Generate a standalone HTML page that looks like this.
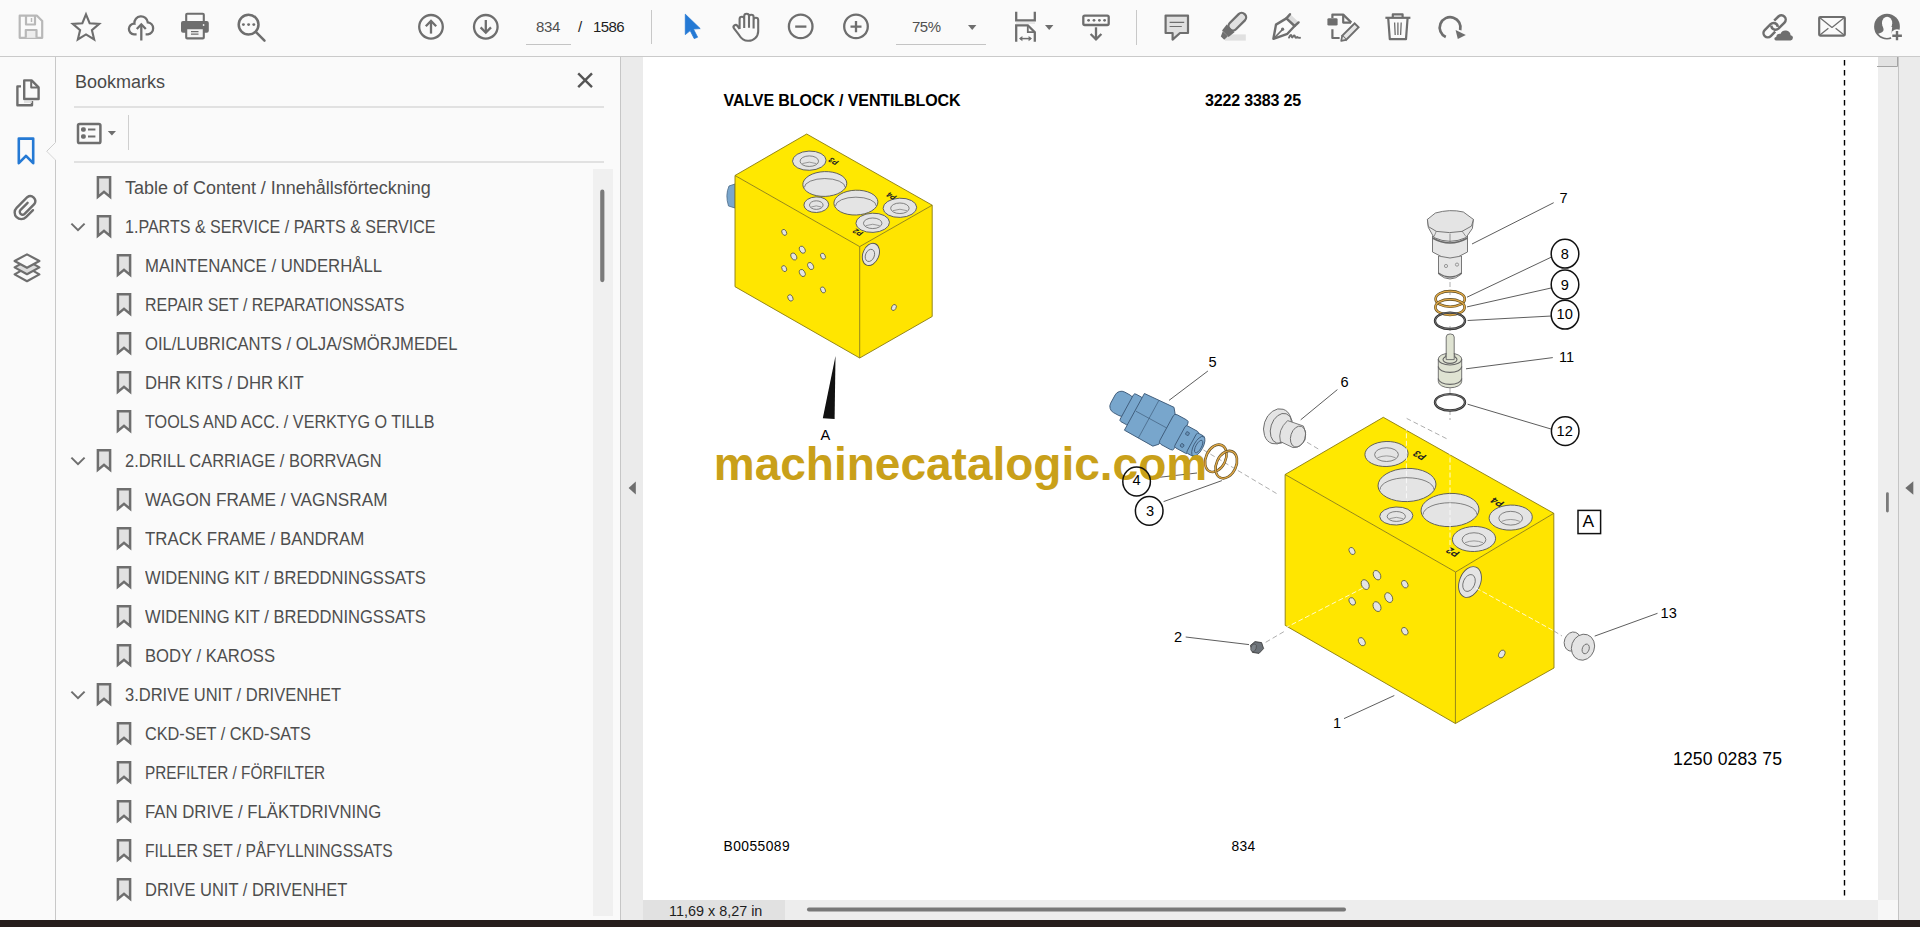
<!DOCTYPE html><html><head><meta charset="utf-8"><style>
*{margin:0;padding:0;box-sizing:border-box}
html,body{width:1920px;height:927px;overflow:hidden;background:#fafafa;font-family:"Liberation Sans",sans-serif;position:relative}
.a{position:absolute}
.t{position:absolute;white-space:nowrap;font-family:"Liberation Sans",sans-serif}
.bm{position:absolute;font-size:18px;line-height:20px;color:#4e4e4e;white-space:nowrap;transform-origin:0 0}
svg{position:absolute;left:0;top:0;overflow:visible}
</style></head><body>
<div class="a" style="left:0;top:0;width:1920px;height:56px;background:#fafafa"></div>
<div class="a" style="left:0;top:56px;width:1920px;height:1px;background:#cacaca"></div>
<div class="a" style="left:0;top:57px;width:55px;height:863px;background:#fafafa"></div>
<div class="a" style="left:56px;top:57px;width:564px;height:863px;background:#fafafa"></div>
<div class="a" style="left:620px;top:57px;width:1px;height:863px;background:#c6c6c6"></div>
<div class="a" style="left:621px;top:57px;width:22px;height:863px;background:#ebebeb"></div>
<div class="a" style="left:643px;top:57px;width:1235px;height:843px;background:#ffffff"></div>
<div class="a" style="left:1878px;top:57px;width:20px;height:843px;background:#eeeeee"></div>
<div class="a" style="left:1898px;top:57px;width:1px;height:863px;background:#c4c4c4"></div>
<div class="a" style="left:1899px;top:57px;width:21px;height:863px;background:#ebebeb"></div>
<div class="a" style="left:643px;top:900px;width:1235px;height:20px;background:#ededed"></div>
<div class="a" style="left:1878px;top:900px;width:20px;height:20px;background:#f7f7f7"></div>
<div class="a" style="left:643px;top:900px;width:142px;height:20px;background:#e1e1e1"></div>
<div class="a" style="left:0;top:920px;width:1920px;height:7px;background:#271e1c"></div>
<svg width="1920" height="57" viewBox="0 0 1920 57"><g fill="none" stroke="#b8b8b8" stroke-width="2.2" stroke-linejoin="round"><path d="M19.7,15.7 H37 L42.2,21 V37.8 H19.7 Z"/><path d="M26,15.7 V24.5 H35 V15.7"/><path d="M31.5,18 V22" stroke-width="1.5"/><path d="M25.8,37.8 V30 H36.5 V37.8" fill="#ededed"/></g><path d="M86.00,14.30 L89.64,23.18 L99.22,23.90 L91.90,30.12 L94.17,39.45 L86.00,34.40 L77.83,39.45 L80.10,30.12 L72.78,23.90 L82.36,23.18 Z" fill="none" stroke="#6e6e6e" stroke-width="2.1" stroke-linejoin="miter"/><g fill="none" stroke="#6e6e6e" stroke-width="2.3" stroke-linecap="butt"><path d="M136.6,34.3 H134 A5.3,5.3 0 0 1 134.4,23.7 A6.7,6.7 0 0 1 147.8,22.4 A6,6 0 0 1 148,34.3 H145.6"/><path d="M141.3,40.5 V24.5"/><path d="M136.8,29 L141.3,24.3 L145.8,29"/></g><g><rect x="186.2" y="13.8" width="17.6" height="10" fill="none" stroke="#6e6e6e" stroke-width="2.1" rx="1"/><rect x="181" y="21" width="27.8" height="11.8" rx="2" fill="#6e6e6e"/><rect x="186.2" y="28.2" width="17.6" height="10.2" fill="#f4f4f4" stroke="#6e6e6e" stroke-width="2.1" rx="1"/><path d="M191,31.6 H198.5 M191,34.2 H198.5" stroke="#6e6e6e" stroke-width="1.2"/><circle cx="203.6" cy="25" r="0.9" fill="#f0f0f0"/></g><g fill="none" stroke="#6e6e6e" stroke-width="2.5" stroke-linecap="round"><circle cx="248.6" cy="24.6" r="9.9"/><path d="M255.8,31.8 L264.5,40.6"/></g><g fill="#6e6e6e"><circle cx="243.4" cy="24.6" r="1.45"/><circle cx="248.6" cy="24.6" r="1.45"/><circle cx="253.8" cy="24.6" r="1.45"/></g><g fill="none" stroke="#6e6e6e" stroke-width="2.3"><circle cx="431" cy="26.8" r="11.8"/><path d="M431,33.6 V21"/><path d="M425.8,26.2 L431,21 L436.2,26.2"/></g><g fill="none" stroke="#6e6e6e" stroke-width="2.3"><circle cx="485.8" cy="26.8" r="11.8"/><path d="M485.8,20 V32.6"/><path d="M480.6,27.4 L485.8,32.6 L491.0,27.4"/></g><rect x="526" y="44" width="45" height="1" fill="#c4c4c4"/><rect x="651" y="10" width="1" height="34" fill="#c8c8c8"/><rect x="1136" y="10" width="1" height="35" fill="#c8c8c8"/><path d="M685.3,14.2 L700.2,28.6 L693.4,29 L697.6,37.2 L694.2,38.6 L690.2,30.6 L685.3,34.6 Z" fill="#2479d4" stroke="#2479d4" stroke-width="0.8" stroke-linejoin="round"/><path d="M739.6,29 V19 a2.3,2.3 0 0 1 4.6,0 V28 M744.2,28 V16.2 a2.4,2.4 0 0 1 4.8,0 V27.8 M749,27.8 V17 a2.3,2.3 0 0 1 4.6,0 V28.4 M753.6,28.4 V20 a2.3,2.3 0 0 1 4.6,0 V31.2 a9.6,9.6 0 0 1 -9.6,9.6 h-0.8 c-4.2,0 -6.8,-2.6 -8.6,-5.6 L734,28.4 a2.1,2.1 0 0 1 3.4,-2.6 L739.6,29" fill="none" stroke="#6e6e6e" stroke-width="2.1" stroke-linejoin="round"/><g fill="none" stroke="#6e6e6e" stroke-width="2.3"><circle cx="800.7" cy="26.4" r="11.8"/><path d="M795.2,26.6 H806.4"/><circle cx="856" cy="26.4" r="11.8"/><path d="M850.5,26.6 H861.5 M856,21 V32.2"/></g><rect x="896" y="44" width="90" height="1" fill="#c4c4c4"/><path d="M968,25 H976.4 L972.2,30 Z" fill="#6e6e6e"/><g fill="none" stroke="#6e6e6e" stroke-width="2.3"><path d="M1016.2,11.8 V20.3 H1034.8 V11.8"/><path d="M1016.2,41.8 V25.3 H1027.8 L1034.8,32.2 V41.8"/><path d="M1027.8,25.3 V32.2 H1034.8" stroke-width="1.8"/><path d="M1020,38.6 H1031" stroke-width="1.5"/></g><path d="M1019,38.6 L1022.4,36 V41.2 Z M1032,38.6 L1028.6,36 V41.2 Z" fill="#6e6e6e"/><rect x="1016" y="22.5" width="19" height="1" fill="#d8d8d8"/><path d="M1045,25 H1053.4 L1049.2,30 Z" fill="#6e6e6e"/><g fill="none" stroke="#6e6e6e" stroke-width="2.3"><rect x="1083.3" y="15.6" width="25.4" height="9.4" rx="1.5"/><path d="M1096,27.3 V39.5"/><path d="M1090.6,34 L1096,39.4 L1101.4,34"/></g><g fill="#6e6e6e"><circle cx="1088.6" cy="20.3" r="1.4"/><circle cx="1094" cy="20.3" r="1.4"/><circle cx="1099.4" cy="20.3" r="1.4"/><circle cx="1104.6" cy="20.3" r="1.4"/></g><path d="M1165.6,15.6 H1188 V33 H1180 L1172.6,39.6 V33 H1165.6 Z" fill="#e0e0e0" stroke="#6e6e6e" stroke-width="2.2" stroke-linejoin="round"/><path d="M1169.6,22.4 H1184.2 M1169.6,26.5 H1181.8" stroke="#6e6e6e" stroke-width="1.2"/><rect x="1225" y="34.4" width="20.8" height="6.2" fill="#e0e0e0"/><g transform="translate(1230.6,28.4) rotate(-45)"><rect x="-1" y="-4.4" width="21" height="8.8" rx="4.2" fill="#e0e0e0" stroke="#6e6e6e" stroke-width="2.3"/><path d="M0,-5.5 L-7.5,-4.6 L-7.5,4.6 L0,5.5 Z" fill="#6e6e6e"/><path d="M-7.5,-3.6 L-12.6,-1.2 L-12.6,3.6 L-7.5,3.6 Z" fill="#6e6e6e"/></g><path d="M1286.4,18.4 L1290,14 L1298.8,22.2 L1294.6,26 Z" fill="#dcdcdc"/><g fill="none" stroke="#6e6e6e" stroke-width="2.4" stroke-linejoin="round" stroke-linecap="round"><path d="M1273.4,38.8 L1276,24.6 L1286.4,18.4 L1294.6,26 L1287.4,33.8 Z"/><path d="M1286.4,18.4 L1290,14.2 M1294.6,26 L1298.6,22.4"/><path d="M1274,38.2 L1282.4,29.6" stroke-width="1.6"/><path d="M1289,37.6 c1.2,-2.6 2.4,-3.4 2.6,-1.4 c0.2,1.8 0.8,1.6 1.6,0.2 c0.8,-1.4 1.6,-1.2 1.8,0.2 c0.2,1.4 1.2,1.4 2.2,0.4 c0.8,0.8 1.6,1 2.8,0.8" stroke-width="1.9"/></g><circle cx="1282.6" cy="29.2" r="1.6" fill="#6e6e6e"/><g fill="none" stroke="#6e6e6e" stroke-width="2.2" stroke-linejoin="round"><path d="M1332.4,18 V14.6 H1343.2 L1351.4,22.6"/><path d="M1343.2,14.6 V22.6 H1351"/><path d="M1332.4,29.2 V38 H1339.6"/></g><rect x="1327.4" y="18.2" width="10.2" height="7.4" rx="1.4" fill="#6e6e6e"/><g transform="translate(1349.4,32.6) rotate(-45)"><rect x="-7.4" y="-2.8" width="17.6" height="5.6" fill="#e6e6e6" stroke="#6e6e6e" stroke-width="1.9"/><path d="M-7.4,-2.8 L-11.6,0 L-7.4,2.8" fill="#e6e6e6" stroke="#6e6e6e" stroke-width="1.7" stroke-linejoin="round"/></g><g fill="none" stroke="#6e6e6e" stroke-width="2.2" stroke-linejoin="round"><path d="M1385.4,17.8 H1410.4"/><path d="M1392.8,17.4 V14.4 H1402.6 V17.4"/><path d="M1388.2,18 L1389.8,39.2 H1406 L1407.6,18"/><path d="M1394.6,22.5 L1395.2,35 M1397.9,22.5 V35 M1401.2,22.5 L1400.6,35" stroke-width="1.3"/></g><path d="M1445.8,37 A10.4,10.4 0 1 1 1460.2,30.2" fill="none" stroke="#6e6e6e" stroke-width="2.7"/><path d="M1455.6,30 L1465.8,35 L1457.8,39 Z" fill="#6e6e6e"/><g fill="none" stroke="#6e6e6e" stroke-width="2.5"><path d="M1774.2,20.7 L1778.41,16.51 A4.3,4.3 0 0 1 1784.49,22.59 L1778.44,28.64 A4.3,4.3 0 0 1 1771.3,25.6"/><path d="M1775.2,31.7 L1770.79,36.09 A4.3,4.3 0 0 1 1764.71,30.01 L1770.61,24.11 A4.3,4.3 0 0 1 1777.8,26.9"/></g><path d="M1775.4,41.8 H1792.4 a3.8,3.8 0 0 0 0.6,-7.6 a6.4,6.4 0 0 0 -12.4,-2 a4.6,4.6 0 0 0 -5.4,4.4 a2.8,2.8 0 0 0 0,5.2 Z" fill="#fafafa"/><path d="M1777,40.4 H1790 a2.5,2.5 0 0 0 0.6,-5.2 a5.2,5.2 0 0 0 -10,-1.4 a3.4,3.4 0 0 0 -4.4,3.2 a1.7,1.7 0 0 0 -0.2,3.4 Z" fill="#6e6e6e"/><g fill="none" stroke="#6e6e6e" stroke-width="2.2" stroke-linejoin="round"><rect x="1819.2" y="17" width="25.6" height="18.6" rx="1"/><path d="M1819.6,17.4 L1832,27.4 L1844.4,17.4" stroke-width="1.3"/><path d="M1819.6,35.2 L1828.4,28.2 M1844.4,35.2 L1835.6,28.2" stroke-width="1.3"/></g><circle cx="1887" cy="26.7" r="12.9" fill="#6e6e6e"/><ellipse cx="1887.1" cy="23.2" rx="5.1" ry="6.5" fill="#fafafa"/><path d="M1883.2,27 L1883.6,30 C1883.2,31.8 1881.4,32.8 1878.2,33.8 A10.8,10.8 0 0 0 1891,37 L1892.2,27 Z" fill="#fafafa"/><circle cx="1897" cy="35.7" r="6.4" fill="#fafafa"/><path d="M1892.3,35.7 H1901.9 M1897,31 V40.3" stroke="#6e6e6e" stroke-width="2.4"/></svg><div class="t" style="left:536px;top:18px;font-size:15px;line-height:17px;color:#505050;letter-spacing:-0.3px">834</div><div class="t" style="left:578px;top:18px;font-size:15px;line-height:17px;color:#222">/</div><div class="t" style="left:593px;top:18px;font-size:15px;line-height:17px;color:#1e1e1e;letter-spacing:-0.6px">1586</div><div class="t" style="left:912px;top:18px;font-size:15px;line-height:17px;color:#505050;letter-spacing:-0.5px">75%</div><svg width="60" height="927" viewBox="0 0 60 927"><path d="M55.5,57 V142.5 L46.8,151.2 L55.5,159.9 V920" fill="none" stroke="#c8c8c8" stroke-width="1"/><path d="M56,142.5 L47.3,151.2 L56,159.9 Z" fill="#fafafa"/><g fill="none" stroke="#6e6e6e" stroke-width="2.4" stroke-linejoin="round"><path d="M21,86.4 H17.4 V105.2 H32 V101"/><path d="M24.2,80.4 H31.6 L38.6,87.4 V99 H24.2 Z"/><path d="M31.2,80.6 V87.6 H38.4" stroke-width="2"/></g><rect x="24" y="101.2" width="8" height="1.6" fill="#dcdcdc"/><path d="M18.8,138.6 H33.2 V163.2 L26,155.8 L18.8,163.2 Z" fill="none" stroke="#2479d4" stroke-width="2.6" stroke-linejoin="round"/><path d="M27.6,204.4 L20.6,211.4 a2.8,2.8 0 0 0 4,4 L34.2,205.8 a5,5 0 0 0 -7,-7 L16.6,209.4 a6.6,6.6 0 0 0 9.4,9.4 L33,211.8" fill="none" stroke="#6e6e6e" stroke-width="2.4" stroke-linecap="round" transform="translate(0,-1.6)"/><g stroke="#6e6e6e" stroke-width="2.2" stroke-linejoin="round"><path d="M14.6,274.4 L27,267.4 L39.4,274.4 L27,281.2 Z" fill="#fafafa"/><path d="M14.6,267.4 L27,260.4 L39.4,267.4 L27,274.2 Z" fill="#dcdcdc"/><path d="M14.6,261 L27,254.4 L39.4,261 L27,267.8 Z" fill="#fafafa"/></g></svg><svg width="640" height="927" viewBox="0 0 640 927"><path d="M578.2,73.4 L592,87.2 M592,73.4 L578.2,87.2" stroke="#555" stroke-width="2.4"/><rect x="74" y="106.5" width="530" height="1" fill="#c8c8c8"/><rect x="74" y="161.5" width="530" height="1" fill="#c8c8c8"/><g fill="none" stroke="#6e6e6e" stroke-width="2.5"><rect x="78" y="124" width="22.4" height="19" rx="1.6"/><path d="M88,129.6 H95.4 M88,136.6 H95.4" stroke-width="2"/></g><rect x="81" y="127.2" width="4.8" height="4.6" rx="1.8" fill="#6e6e6e"/><rect x="81" y="134.2" width="4.8" height="4.6" rx="1.8" fill="#6e6e6e"/><path d="M107.8,131 H116 L111.9,135.4 Z" fill="#6e6e6e"/><rect x="128" y="115" width="1" height="35" fill="#cfcfcf"/><rect x="593" y="169" width="20" height="747" fill="#f0f0f0"/><rect x="600.2" y="189.6" width="4.2" height="92.6" rx="2.1" fill="#7a7a7a"/><path d="M97.9,177.2 H110.10000000000001 V196.9 L104.0,191.8 L97.9,196.9 Z" fill="#e2e2e2" stroke="#6e6e6e" stroke-width="2.5" stroke-linejoin="miter"/><path d="M97.9,216.2 H110.10000000000001 V235.9 L104.0,230.8 L97.9,235.9 Z" fill="#e2e2e2" stroke="#6e6e6e" stroke-width="2.5" stroke-linejoin="miter"/><path d="M71.4,223.6 L78,230.2 L84.6,223.6" fill="none" stroke="#6e6e6e" stroke-width="2"/><path d="M117.9,255.2 H130.1 V274.9 L124.0,269.8 L117.9,274.9 Z" fill="#e2e2e2" stroke="#6e6e6e" stroke-width="2.5" stroke-linejoin="miter"/><path d="M117.9,294.2 H130.1 V313.9 L124.0,308.8 L117.9,313.9 Z" fill="#e2e2e2" stroke="#6e6e6e" stroke-width="2.5" stroke-linejoin="miter"/><path d="M117.9,333.2 H130.1 V352.9 L124.0,347.8 L117.9,352.9 Z" fill="#e2e2e2" stroke="#6e6e6e" stroke-width="2.5" stroke-linejoin="miter"/><path d="M117.9,372.2 H130.1 V391.9 L124.0,386.8 L117.9,391.9 Z" fill="#e2e2e2" stroke="#6e6e6e" stroke-width="2.5" stroke-linejoin="miter"/><path d="M117.9,411.2 H130.1 V430.9 L124.0,425.8 L117.9,430.9 Z" fill="#e2e2e2" stroke="#6e6e6e" stroke-width="2.5" stroke-linejoin="miter"/><path d="M97.9,450.2 H110.10000000000001 V469.9 L104.0,464.8 L97.9,469.9 Z" fill="#e2e2e2" stroke="#6e6e6e" stroke-width="2.5" stroke-linejoin="miter"/><path d="M71.4,457.6 L78,464.2 L84.6,457.6" fill="none" stroke="#6e6e6e" stroke-width="2"/><path d="M117.9,489.2 H130.1 V508.9 L124.0,503.8 L117.9,508.9 Z" fill="#e2e2e2" stroke="#6e6e6e" stroke-width="2.5" stroke-linejoin="miter"/><path d="M117.9,528.2 H130.1 V547.9 L124.0,542.8 L117.9,547.9 Z" fill="#e2e2e2" stroke="#6e6e6e" stroke-width="2.5" stroke-linejoin="miter"/><path d="M117.9,567.2 H130.1 V586.9 L124.0,581.8 L117.9,586.9 Z" fill="#e2e2e2" stroke="#6e6e6e" stroke-width="2.5" stroke-linejoin="miter"/><path d="M117.9,606.2 H130.1 V625.9 L124.0,620.8 L117.9,625.9 Z" fill="#e2e2e2" stroke="#6e6e6e" stroke-width="2.5" stroke-linejoin="miter"/><path d="M117.9,645.2 H130.1 V664.9 L124.0,659.8 L117.9,664.9 Z" fill="#e2e2e2" stroke="#6e6e6e" stroke-width="2.5" stroke-linejoin="miter"/><path d="M97.9,684.2 H110.10000000000001 V703.9 L104.0,698.8 L97.9,703.9 Z" fill="#e2e2e2" stroke="#6e6e6e" stroke-width="2.5" stroke-linejoin="miter"/><path d="M71.4,691.6 L78,698.2 L84.6,691.6" fill="none" stroke="#6e6e6e" stroke-width="2"/><path d="M117.9,723.2 H130.1 V742.9 L124.0,737.8 L117.9,742.9 Z" fill="#e2e2e2" stroke="#6e6e6e" stroke-width="2.5" stroke-linejoin="miter"/><path d="M117.9,762.2 H130.1 V781.9 L124.0,776.8 L117.9,781.9 Z" fill="#e2e2e2" stroke="#6e6e6e" stroke-width="2.5" stroke-linejoin="miter"/><path d="M117.9,801.2 H130.1 V820.9 L124.0,815.8 L117.9,820.9 Z" fill="#e2e2e2" stroke="#6e6e6e" stroke-width="2.5" stroke-linejoin="miter"/><path d="M117.9,840.2 H130.1 V859.9 L124.0,854.8 L117.9,859.9 Z" fill="#e2e2e2" stroke="#6e6e6e" stroke-width="2.5" stroke-linejoin="miter"/><path d="M117.9,879.2 H130.1 V898.9 L124.0,893.8 L117.9,898.9 Z" fill="#e2e2e2" stroke="#6e6e6e" stroke-width="2.5" stroke-linejoin="miter"/></svg><div class="t" style="left:75px;top:72px;font-size:18px;line-height:20px;color:#4a4a4a">Bookmarks</div><div class="bm" style="left:125px;top:178px;transform:scaleX(0.9984)">Table of Content / Innehållsförteckning</div><div class="bm" style="left:125px;top:217px;transform:scaleX(0.8919)">1.PARTS &amp; SERVICE / PARTS &amp; SERVICE</div><div class="bm" style="left:145px;top:256px;transform:scaleX(0.9293)">MAINTENANCE / UNDERHÅLL</div><div class="bm" style="left:145px;top:295px;transform:scaleX(0.8872)">REPAIR SET / REPARATIONSSATS</div><div class="bm" style="left:145px;top:334px;transform:scaleX(0.9241)">OIL/LUBRICANTS / OLJA/SMÖRJMEDEL</div><div class="bm" style="left:145px;top:373px;transform:scaleX(0.9274)">DHR KITS / DHR KIT</div><div class="bm" style="left:145px;top:412px;transform:scaleX(0.8976)">TOOLS AND ACC. / VERKTYG O TILLB</div><div class="bm" style="left:125px;top:451px;transform:scaleX(0.9140)">2.DRILL CARRIAGE / BORRVAGN</div><div class="bm" style="left:145px;top:490px;transform:scaleX(0.9545)">WAGON FRAME / VAGNSRAM</div><div class="bm" style="left:145px;top:529px;transform:scaleX(0.9368)">TRACK FRAME / BANDRAM</div><div class="bm" style="left:145px;top:568px;transform:scaleX(0.9199)">WIDENING KIT / BREDDNINGSSATS</div><div class="bm" style="left:145px;top:607px;transform:scaleX(0.9199)">WIDENING KIT / BREDDNINGSSATS</div><div class="bm" style="left:145px;top:646px;transform:scaleX(0.9239)">BODY / KAROSS</div><div class="bm" style="left:125px;top:685px;transform:scaleX(0.9168)">3.DRIVE UNIT / DRIVENHET</div><div class="bm" style="left:145px;top:724px;transform:scaleX(0.9043)">CKD-SET / CKD-SATS</div><div class="bm" style="left:145px;top:763px;transform:scaleX(0.8526)">PREFILTER / FÖRFILTER</div><div class="bm" style="left:145px;top:802px;transform:scaleX(0.9299)">FAN DRIVE / FLÄKTDRIVNING</div><div class="bm" style="left:145px;top:841px;transform:scaleX(0.8679)">FILLER SET / PÅFYLLNINGSSATS</div><div class="bm" style="left:145px;top:880px;transform:scaleX(0.9166)">DRIVE UNIT / DRIVENHET</div><svg width="1920" height="927" viewBox="0 0 1920 927"><path d="M1844.5,60 V896" stroke="#000" stroke-width="1.4" stroke-dasharray="5.6 4.4"/><path d="M735,184 L729,186 Q725,195 728.5,206 L735,208 Z" fill="#7aa6cc" stroke="#4a6a88" stroke-width="0.8"/><path d="M735,175.5 L859.7,246.6 L859.7,358 L735,286.7 Z" fill="#ffe600"/><path d="M859.7,246.6 L932.2,205.2 L932.2,316.5 L859.7,358 Z" fill="#ffe400"/><path d="M806.7,134 L932.2,205.2 L859.7,246.6 L735,175.5 Z" fill="#ffe800"/><path d="M806.7,134 L932.2,205.2 L932.2,316.5 L859.7,358 L735,286.7 L735,175.5 Z M735,175.5 L859.7,246.6 L932.2,205.2 M859.7,246.6 L859.7,358" fill="none" stroke="#8a7c10" stroke-width="0.9" stroke-linejoin="round"/><ellipse cx="809.3" cy="160.7" rx="16.8" ry="9.6" fill="#e4e4e4" stroke="#555" stroke-width="0.9" transform="rotate(-2 809.3 160.7)"/><ellipse cx="809.3" cy="161.17999999999998" rx="9.240000000000002" ry="5.28" fill="#e4e4e4" stroke="#666" stroke-width="0.8"/><path d="M802.2439999999999,163.57999999999998 Q809.3,160.7 816.356,163.57999999999998" fill="none" stroke="#777" stroke-width="0.7"/><ellipse cx="824.8" cy="184" rx="22" ry="12.4" fill="#e4e4e4" stroke="#555" stroke-width="0.9" transform="rotate(-2 824.8 184)"/><path d="M804.34,187.47 A20.46,8.93 0 0 1 845.26,187.47" fill="none" stroke="#666" stroke-width="0.8"/><ellipse cx="816.3" cy="204.7" rx="12.4" ry="7.8" fill="#e4e4e4" stroke="#555" stroke-width="0.9" transform="rotate(-2 816.3 204.7)"/><ellipse cx="816.3" cy="205.08999999999997" rx="6.820000000000001" ry="4.29" fill="#e4e4e4" stroke="#666" stroke-width="0.8"/><path d="M811.092,207.04 Q816.3,204.7 821.5079999999999,207.04" fill="none" stroke="#777" stroke-width="0.7"/><ellipse cx="855.9" cy="202.6" rx="22" ry="12.4" fill="#e4e4e4" stroke="#555" stroke-width="0.9" transform="rotate(-2 855.9 202.6)"/><path d="M835.44,206.07 A20.46,8.93 0 0 1 876.36,206.07" fill="none" stroke="#666" stroke-width="0.8"/><ellipse cx="899.9" cy="207.8" rx="16.8" ry="9.6" fill="#e4e4e4" stroke="#555" stroke-width="0.9" transform="rotate(-2 899.9 207.8)"/><ellipse cx="899.9" cy="208.28" rx="9.240000000000002" ry="5.28" fill="#e4e4e4" stroke="#666" stroke-width="0.8"/><path d="M892.8439999999999,210.68 Q899.9,207.8 906.956,210.68" fill="none" stroke="#777" stroke-width="0.7"/><ellipse cx="872.7" cy="222.8" rx="16.8" ry="9.6" fill="#e4e4e4" stroke="#555" stroke-width="0.9" transform="rotate(-2 872.7 222.8)"/><ellipse cx="872.7" cy="223.28" rx="9.240000000000002" ry="5.28" fill="#e4e4e4" stroke="#666" stroke-width="0.8"/><path d="M865.644,225.68 Q872.7,222.8 879.7560000000001,225.68" fill="none" stroke="#777" stroke-width="0.7"/><ellipse cx="784.2" cy="232.4" rx="2.2" ry="3.2" fill="#e4e4e4" stroke="#5a5a40" stroke-width="0.8" transform="rotate(-28 784.2 232.4)"/><ellipse cx="802.3" cy="249.7" rx="2.6" ry="3.8" fill="#e4e4e4" stroke="#5a5a40" stroke-width="0.8" transform="rotate(-28 802.3 249.7)"/><ellipse cx="793.8" cy="256.5" rx="2.6" ry="3.8" fill="#e4e4e4" stroke="#5a5a40" stroke-width="0.8" transform="rotate(-28 793.8 256.5)"/><ellipse cx="823" cy="256.2" rx="2.2" ry="3.2" fill="#e4e4e4" stroke="#5a5a40" stroke-width="0.8" transform="rotate(-28 823 256.2)"/><ellipse cx="784.2" cy="268.6" rx="2.2" ry="3.2" fill="#e4e4e4" stroke="#5a5a40" stroke-width="0.8" transform="rotate(-28 784.2 268.6)"/><ellipse cx="810.6" cy="266" rx="2.6" ry="3.8" fill="#e4e4e4" stroke="#5a5a40" stroke-width="0.8" transform="rotate(-28 810.6 266)"/><ellipse cx="802.3" cy="273" rx="2.6" ry="3.8" fill="#e4e4e4" stroke="#5a5a40" stroke-width="0.8" transform="rotate(-28 802.3 273)"/><ellipse cx="823" cy="289.9" rx="2.2" ry="3.2" fill="#e4e4e4" stroke="#5a5a40" stroke-width="0.8" transform="rotate(-28 823 289.9)"/><ellipse cx="790.4" cy="297.9" rx="2.4" ry="3.4" fill="#e4e4e4" stroke="#5a5a40" stroke-width="0.8" transform="rotate(-28 790.4 297.9)"/><ellipse cx="893.9" cy="307.5" rx="2.2" ry="3.2" fill="#e4e4e4" stroke="#5a5a40" stroke-width="0.8" transform="rotate(28 893.9 307.5)"/><ellipse cx="870.9" cy="254.4" rx="8" ry="11.5" fill="#e4e4e4" stroke="#555" stroke-width="0.9" transform="rotate(22 870.9 254.4)"/><ellipse cx="869.9" cy="255.4" rx="4.4" ry="6.325" fill="#e4e4e4" stroke="#666" stroke-width="0.8" transform="rotate(22 869.9 255.4)"/><g font-family="Liberation Sans" font-size="7.6" font-weight="bold" fill="#222"><text transform="translate(839.6,161.5) rotate(-152) skewX(-20)" text-anchor="start">P3</text><text transform="translate(897.6,196.3) rotate(-152) skewX(-20)">P4</text><text transform="translate(863.9,232.6) rotate(-152) skewX(-20)">P2</text></g><path d="M835.5,356 L822.8,418.3 L834.6,419 Z" fill="#111"/><path d="M1285.1,474.5 L1455.6,572 L1455.4,723.5 L1285.2,625.4 Z" fill="#ffe600"/><path d="M1455.6,572 L1553.8,513.3 L1554,668 L1455.4,723.5 Z" fill="#ffe400"/><path d="M1383.3,417.3 L1553.8,513.3 L1455.6,572 L1285.1,474.5 Z" fill="#ffe800"/><path d="M1383.3,417.3 L1553.8,513.3 L1554,668 L1455.4,723.5 L1285.2,625.4 L1285.1,474.5 Z M1285.1,474.5 L1455.6,572 L1553.8,513.3 M1455.6,572 L1455.4,723.5" fill="none" stroke="#8a7c10" stroke-width="0.9" stroke-linejoin="round"/><ellipse cx="1386.5" cy="454" rx="21.6" ry="12.5" fill="#e4e4e4" stroke="#555" stroke-width="0.9" transform="rotate(-2 1386.5 454)"/><ellipse cx="1386.5" cy="454.625" rx="11.880000000000003" ry="6.875000000000001" fill="#e4e4e4" stroke="#666" stroke-width="0.8"/><path d="M1377.428,457.75 Q1386.5,454 1395.572,457.75" fill="none" stroke="#777" stroke-width="0.7"/><ellipse cx="1407" cy="485" rx="29" ry="16.6" fill="#e4e4e4" stroke="#555" stroke-width="0.9" transform="rotate(-2 1407 485)"/><path d="M1380.03,489.65 A26.97,11.95 0 0 1 1433.97,489.65" fill="none" stroke="#666" stroke-width="0.8"/><ellipse cx="1396.3" cy="516" rx="16.6" ry="9" fill="#e4e4e4" stroke="#555" stroke-width="0.9" transform="rotate(-2 1396.3 516)"/><ellipse cx="1396.3" cy="516.45" rx="9.13" ry="4.95" fill="#e4e4e4" stroke="#666" stroke-width="0.8"/><path d="M1389.328,518.7 Q1396.3,516 1403.272,518.7" fill="none" stroke="#777" stroke-width="0.7"/><ellipse cx="1450" cy="510" rx="29" ry="16.6" fill="#e4e4e4" stroke="#555" stroke-width="0.9" transform="rotate(-2 1450 510)"/><path d="M1423.03,514.65 A26.97,11.95 0 0 1 1476.97,514.65" fill="none" stroke="#666" stroke-width="0.8"/><ellipse cx="1510.7" cy="517.6" rx="21.6" ry="12.5" fill="#e4e4e4" stroke="#555" stroke-width="0.9" transform="rotate(-2 1510.7 517.6)"/><ellipse cx="1510.7" cy="518.225" rx="11.880000000000003" ry="6.875000000000001" fill="#e4e4e4" stroke="#666" stroke-width="0.8"/><path d="M1501.6280000000002,521.35 Q1510.7,517.6 1519.772,521.35" fill="none" stroke="#777" stroke-width="0.7"/><ellipse cx="1474" cy="539" rx="21.6" ry="12.5" fill="#e4e4e4" stroke="#555" stroke-width="0.9" transform="rotate(-2 1474 539)"/><ellipse cx="1474" cy="539.625" rx="11.880000000000003" ry="6.875000000000001" fill="#e4e4e4" stroke="#666" stroke-width="0.8"/><path d="M1464.928,542.75 Q1474,539 1483.072,542.75" fill="none" stroke="#777" stroke-width="0.7"/><ellipse cx="1352" cy="551" rx="2.6" ry="3.8" fill="#e4e4e4" stroke="#5a5a40" stroke-width="0.8" transform="rotate(-28 1352 551)"/><ellipse cx="1377" cy="575.2" rx="3.4" ry="5" fill="#e4e4e4" stroke="#5a5a40" stroke-width="0.8" transform="rotate(-28 1377 575.2)"/><ellipse cx="1365.2" cy="584.6" rx="3.6" ry="5.2" fill="#e4e4e4" stroke="#5a5a40" stroke-width="0.8" transform="rotate(-28 1365.2 584.6)"/><ellipse cx="1404.8" cy="584.2" rx="2.8" ry="4" fill="#e4e4e4" stroke="#5a5a40" stroke-width="0.8" transform="rotate(-28 1404.8 584.2)"/><ellipse cx="1352.2" cy="601.4" rx="2.8" ry="4" fill="#e4e4e4" stroke="#5a5a40" stroke-width="0.8" transform="rotate(-28 1352.2 601.4)"/><ellipse cx="1388.7" cy="597.6" rx="3.6" ry="5.2" fill="#e4e4e4" stroke="#5a5a40" stroke-width="0.8" transform="rotate(-28 1388.7 597.6)"/><ellipse cx="1377" cy="606.6" rx="3.6" ry="5.2" fill="#e4e4e4" stroke="#5a5a40" stroke-width="0.8" transform="rotate(-28 1377 606.6)"/><ellipse cx="1404.8" cy="631.2" rx="2.8" ry="4" fill="#e4e4e4" stroke="#5a5a40" stroke-width="0.8" transform="rotate(-28 1404.8 631.2)"/><ellipse cx="1361.8" cy="641.7" rx="3" ry="4.4" fill="#e4e4e4" stroke="#5a5a40" stroke-width="0.8" transform="rotate(-28 1361.8 641.7)"/><ellipse cx="1501.8" cy="654" rx="2.8" ry="4.2" fill="#e4e4e4" stroke="#5a5a40" stroke-width="0.8" transform="rotate(28 1501.8 654)"/><ellipse cx="1470" cy="582" rx="10.5" ry="16" fill="#e4e4e4" stroke="#555" stroke-width="0.9" transform="rotate(22 1470 582)"/><ellipse cx="1469" cy="583" rx="5.775" ry="8.8" fill="#e4e4e4" stroke="#666" stroke-width="0.8" transform="rotate(22 1469 583)"/><g font-family="Liberation Sans" font-size="9.6" font-weight="bold" fill="#222"><text transform="translate(1427.3,455.7) rotate(-152) skewX(-20)">P3</text><text transform="translate(1505,502.5) rotate(-152) skewX(-20)">P4</text><text transform="translate(1460.4,552.6) rotate(-152) skewX(-20)">P2</text></g><g fill="none" stroke="#999" stroke-width="0.8" stroke-dasharray="5 3"><path d="M1450,282 V300"/><path d="M1450,326 V336"/><path d="M1450,388 V396"/><path d="M1450,410 V420"/><path d="M1406.4,418.3 L1449.2,440"/><path d="M1196.6,445.9 L1277.7,494.2"/><path d="M1300.2,438.2 L1320,450"/><path d="M1265.7,642.3 L1285,631"/><path d="M1554,631 L1562,636"/></g><g fill="none" stroke="#fff" stroke-width="0.9" stroke-dasharray="5 2.5" opacity="0.9"><path d="M1450,420 V552"/><path d="M1406.4,418.3 V500"/><path d="M1449.2,440 V445"/><path d="M1285,628 L1365,587"/><path d="M1476,588 L1554,631"/></g><g stroke="#6a6a6a" stroke-width="0.9" fill="#e6e6e6" stroke-linejoin="round"><path d="M1438.5,256 V274 Q1450,284 1461.5,274 V256 Z"/><path d="M1432.5,236 V252 Q1450,264 1467.5,252 V236 Z"/><path d="M1427.4,219.4 L1428.4,227.6 L1434,237.6 Q1450,245 1466,237.6 L1472.4,228.4 L1473.4,219.4 Z"/><path d="M1427.4,219.4 L1435.4,213 Q1450,208.8 1463.4,212 L1473.4,219.4 L1471.6,226 L1462,231.4 Q1450,233.8 1436.4,231.4 L1428.4,226.6 Z" fill="#e4e4e4"/><path d="M1434,236.6 L1436.4,231 M1466,236.6 L1462,231 M1450,233.6 V243" fill="none" stroke-width="0.7"/><path d="M1432.5,238 Q1450,248 1467.5,238" fill="none" stroke-width="1.5"/><path d="M1438.5,273 Q1450,281 1461.5,273" fill="none" stroke-width="1.5"/></g><circle cx="1446" cy="266" r="1.6" fill="none" stroke="#777" stroke-width="0.7"/><circle cx="1457" cy="264.6" r="1.6" fill="none" stroke="#777" stroke-width="0.7"/><g fill="none"><ellipse cx="1450.2" cy="298.9" rx="14.6" ry="7.8" stroke="#5a4a20" stroke-width="2.6"/><ellipse cx="1450.2" cy="298.9" rx="14.6" ry="7.8" stroke="#e0a848" stroke-width="1.4"/><ellipse cx="1450" cy="307.2" rx="14.6" ry="7.8" stroke="#5a4a20" stroke-width="2.6"/><ellipse cx="1450" cy="307.2" rx="14.6" ry="7.8" stroke="#e0a848" stroke-width="1.4"/><ellipse cx="1450" cy="320.8" rx="15" ry="8.2" stroke="#2e2e2e" stroke-width="2.4"/><ellipse cx="1450" cy="320.8" rx="15" ry="8.2" stroke="#9a9a9a" stroke-width="0.6"/><ellipse cx="1450" cy="402.3" rx="15" ry="8.2" stroke="#2e2e2e" stroke-width="2.4"/><ellipse cx="1450" cy="402.3" rx="15" ry="8.2" stroke="#9a9a9a" stroke-width="0.6"/></g><g stroke="#666" stroke-width="0.9" fill="#dfe3d2"><path d="M1438.3,359 A11.7,5.8 0 0 1 1461.7,359 V381.4 A11.7,6.4 0 0 1 1438.3,381.4 Z"/><path d="M1438.3,359.2 A11.7,5.8 0 0 0 1461.7,359.2 M1438.3,366.6 A11.7,5.8 0 0 0 1461.7,366.6 M1438.3,378.6 A11.7,5.8 0 0 0 1461.7,378.6" fill="none" stroke-width="1.1"/><ellipse cx="1450" cy="359.6" rx="7" ry="3.8" stroke-width="1.1"/><path d="M1446.2,359.6 V337 A3.9,3 0 0 1 1454.2,337 V359.6 Z" stroke-width="0.9"/><path d="M1443,359 Q1446.2,357 1446.2,353 M1457,359 Q1454.2,357 1454.2,353" fill="none" stroke-width="0.8"/></g><g transform="translate(1117,402) rotate(28.6)" stroke="#3d5a78" stroke-width="0.85" stroke-linejoin="round" fill="#78a6cc"><rect x="-5" y="-12.4" width="20" height="23.4" rx="7"/><rect x="11" y="-16" width="10.5" height="31.4" rx="2"/><path d="M20,-20.6 L52.6,-22.6 L57,-17 L57,17 L52.6,21.6 L20,21.2 Z"/><path d="M21,-1 H57 M36,-21.6 V21.4" fill="none" stroke-width="0.6"/><rect x="56" y="-17.6" width="16.6" height="33.8" rx="3"/><rect x="71.6" y="-12.8" width="15" height="25" rx="2"/><rect x="85" y="-11.6" width="9" height="23" rx="2"/><ellipse cx="92.6" cy="0" rx="4.6" ry="11" fill="#7eaad0"/><ellipse cx="93" cy="0" rx="2.8" ry="7" fill="none"/><circle cx="77" cy="-6" r="1.8" fill="#6a94b8"/><circle cx="78" cy="7" r="1.8" fill="#6a94b8"/></g><g fill="none"><ellipse cx="1215.8" cy="458.3" rx="9.8" ry="14.4" transform="rotate(25 1215.8 458.3)" stroke="#5a4a20" stroke-width="2.6"/><ellipse cx="1215.8" cy="458.3" rx="9.8" ry="14.4" transform="rotate(25 1215.8 458.3)" stroke="#e0a848" stroke-width="1.4"/><ellipse cx="1226.3" cy="464.6" rx="9.8" ry="14.4" transform="rotate(25 1226.3 464.6)" stroke="#5a4a20" stroke-width="2.6"/><ellipse cx="1226.3" cy="464.6" rx="9.8" ry="14.4" transform="rotate(25 1226.3 464.6)" stroke="#e0a848" stroke-width="1.4"/></g><g stroke="#6e6e6e" stroke-width="0.9" fill="#e4e4e4"><ellipse cx="1277.6" cy="426.4" rx="13.6" ry="18" transform="rotate(18 1277.6 426.4)"/><ellipse cx="1281.4" cy="428.4" rx="10.6" ry="15.4" transform="rotate(18 1281.4 428.4)" fill="none"/><path d="M1287.6,420.6 L1303.4,426 Q1307,432 1305,440 Q1300,448 1293,447.6 L1280.4,441.6 Q1277.4,430 1287.6,420.6 Z"/><ellipse cx="1298" cy="436.6" rx="7.2" ry="10.8" transform="rotate(18 1298 436.6)" fill="none"/></g><g stroke="#6e6e6e" stroke-width="0.9" fill="#e4e4e4"><ellipse cx="1572.4" cy="641.6" rx="8" ry="9.8" transform="rotate(20 1572.4 641.6)"/><ellipse cx="1583" cy="647.2" rx="11.4" ry="13.2" transform="rotate(20 1583 647.2)"/><ellipse cx="1585.7" cy="648.9" rx="3.4" ry="5" transform="rotate(20 1585.7 648.9)" fill="#dedede"/></g><path d="M1250.4,645.4 L1255,641.6 L1261.6,642.6 L1263.6,648.6 L1259,653.4 L1252.4,652.4 Z" fill="#6c7278" stroke="#333" stroke-width="0.8"/><ellipse cx="1253.6" cy="647.8" rx="2.6" ry="4" fill="#7c8288" stroke="#444" stroke-width="0.6" transform="rotate(20 1253.6 647.8)"/><g stroke="#333" stroke-width="0.8" fill="none"><path d="M1472,244 L1553.7,202.7"/><path d="M1467,297.2 L1551.6,257"/><path d="M1467,306.9 L1551.6,287.9"/><path d="M1467.6,320.5 L1551.6,316"/><path d="M1466,368.8 L1552.8,357.6"/><path d="M1467.6,404.2 L1551.6,429.2"/><path d="M1169,400.4 L1207.9,371"/><path d="M1300.7,419.8 L1337.4,389.6"/><path d="M1150.4,478.3 L1197,473"/><path d="M1163.6,501.6 L1221.9,480.6"/><path d="M1185.7,637 L1249,644.6"/><path d="M1594.7,636.1 L1657.5,613.3"/><path d="M1344,718.6 L1394.3,695.5"/></g><g fill="#fff" stroke="#111" stroke-width="1.5"><ellipse cx="1565" cy="253.70000000000002" rx="13.8" ry="14.4"/><ellipse cx="1565" cy="284.5" rx="13.8" ry="14.4"/><ellipse cx="1565" cy="314.7" rx="13.8" ry="14.4"/><ellipse cx="1565.2" cy="431.1" rx="13.8" ry="14.4"/><ellipse cx="1149.2" cy="510.90000000000003" rx="13.8" ry="14.4"/></g><rect x="1578" y="510.4" width="22.6" height="23.2" fill="#fff" stroke="#111" stroke-width="1.5"/></svg><div class="t" style="left:723.5px;top:93.4px;font-size:16px;line-height:1;font-weight:bold;color:#000;letter-spacing:-0.1px">VALVE BLOCK / VENTILBLOCK</div><div class="t" style="left:1205px;top:93.2px;font-size:16px;line-height:1;font-weight:bold;color:#000;letter-spacing:-0.15px">3222 3383 25</div><div class="t" style="left:1673px;top:751px;font-size:17.6px;line-height:1;font-weight:normal;color:#000;letter-spacing:0.12px">1250 0283 75</div><div class="t" style="left:723.5px;top:840px;font-size:13.8px;line-height:1;font-weight:normal;color:#000;letter-spacing:0.45px">B0055089</div><div class="t" style="left:1231.5px;top:840px;font-size:13.8px;line-height:1;font-weight:normal;color:#000;letter-spacing:0.3px">834</div><div class="t" style="left:1559.6px;top:191px;font-size:14.6px;line-height:1;font-weight:normal;color:#000;">7</div><div class="t" style="left:1560.8px;top:247.3px;font-size:14.6px;line-height:1;font-weight:normal;color:#000;">8</div><div class="t" style="left:1560.8px;top:278.3px;font-size:14.6px;line-height:1;font-weight:normal;color:#000;">9</div><div class="t" style="left:1556.6px;top:307.3px;font-size:14.6px;line-height:1;font-weight:normal;color:#000;">10</div><div class="t" style="left:1559px;top:349.6px;font-size:14.6px;line-height:1;font-weight:normal;color:#000;">11</div><div class="t" style="left:1556.6px;top:424.2px;font-size:14.6px;line-height:1;font-weight:normal;color:#000;">12</div><div class="t" style="left:1208.6px;top:355px;font-size:14.6px;line-height:1;font-weight:normal;color:#000;">5</div><div class="t" style="left:1340.6px;top:374.6px;font-size:14.6px;line-height:1;font-weight:normal;color:#000;">6</div><div class="t" style="left:1146px;top:504.2px;font-size:14.6px;line-height:1;font-weight:normal;color:#000;">3</div><div class="t" style="left:1132.4px;top:473.2px;font-size:14.6px;line-height:1;font-weight:normal;color:#000;">4</div><div class="t" style="left:1174px;top:629.8px;font-size:14.6px;line-height:1;font-weight:normal;color:#000;">2</div><div class="t" style="left:1660.6px;top:606px;font-size:14.6px;line-height:1;font-weight:normal;color:#000;">13</div><div class="t" style="left:1333px;top:716px;font-size:14.6px;line-height:1;font-weight:normal;color:#000;">1</div><div class="t" style="left:820.4px;top:428px;font-size:14.6px;line-height:1;font-weight:normal;color:#000;">A</div><div class="t" style="left:1582.6px;top:513.4px;font-size:17.4px;line-height:1;font-weight:normal;color:#000;">A</div><div class="t" style="left:713.8px;top:441.4px;font-size:46px;line-height:1;font-weight:bold;color:#c9a019">machinecatalogic.com</div><svg width="1920" height="927" viewBox="0 0 1920 927"><ellipse cx="1136.6" cy="481.5" rx="13.8" ry="14.4" fill="none" stroke="#111" stroke-width="1.5"/></svg><svg width="1920" height="927" viewBox="0 0 1920 927"><rect x="807" y="907.6" width="539" height="3.8" rx="1.9" fill="#787878"/><path d="M628.6,488 L635.8,481.4 V494.6 Z" fill="#6e6e6e"/><path d="M1905.3,488 L1913.3,481.2 V494.8 Z" fill="#6e6e6e"/><rect x="1886" y="492.2" width="2.8" height="20.2" rx="1.4" fill="#7a7a7a"/><rect x="1878" y="57" width="19" height="9.5" fill="#e2e2e2"/><path d="M1877,66.5 H1897.5 V57" fill="none" stroke="#a4a4a4" stroke-width="1"/></svg><div class="t" style="left:669px;top:903px;font-size:14.4px;line-height:16px;color:#1e1e1e">11,69 x 8,27 in</div></body></html>
